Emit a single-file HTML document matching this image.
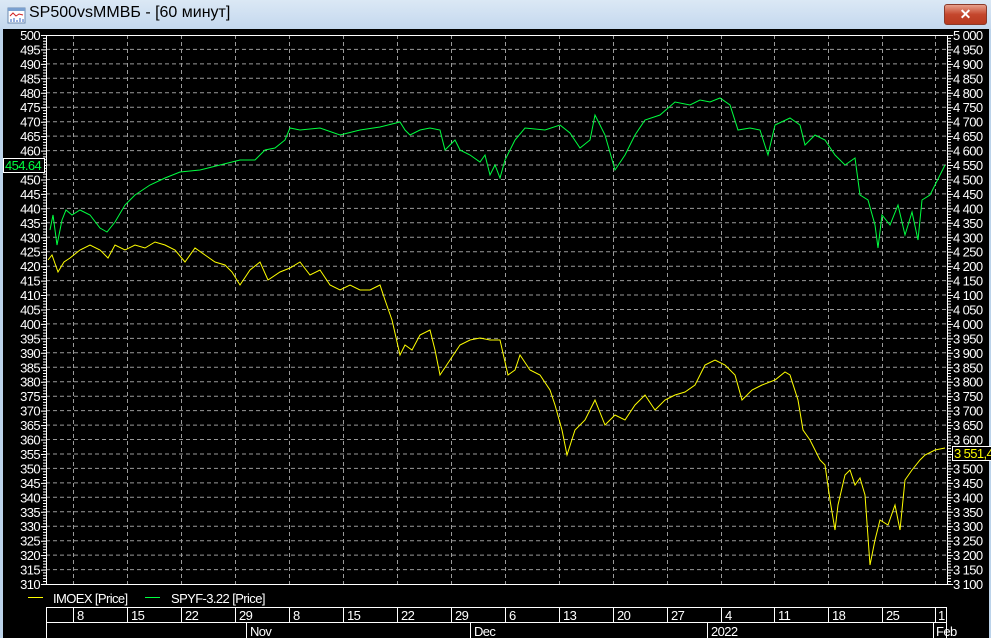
<!DOCTYPE html>
<html><head><meta charset="utf-8"><style>
html,body{margin:0;padding:0;width:991px;height:638px;overflow:hidden;background:#bcd3ea}
#tb{position:absolute;left:0;top:0;width:991px;height:29px;background:linear-gradient(#dbe8f5,#c4d8ee)}
#tt{position:absolute;left:29px;top:4px;font:16px "Liberation Sans",sans-serif;color:#000}
#cl{position:absolute;left:944px;top:4px;width:41px;height:19px;border:1px solid #8a3a2a;border-radius:3px;background:linear-gradient(#e8a08c,#c4462c 50%,#b83a20);color:#fff;font:bold 14px "Liberation Sans",sans-serif;text-align:center;line-height:19px}
svg{position:absolute;left:0;top:0}
text{font-family:"Liberation Sans",sans-serif;font-size:13px;fill:#fff;letter-spacing:-0.6px}
</style></head><body>
<div id="tb"></div>
<svg width="20" height="20" style="left:7px;top:6px"><rect x="1" y="2" width="17" height="15" fill="#fff" stroke="#6a8ab0"/><rect x="1" y="2" width="17" height="3" fill="#7aa0d0"/><path d="M3 10l3-3 3 3 3-2 4 1" stroke="#d02020" fill="none"/><path d="M4 16v-3M7 16v-4M10 16v-2M13 16v-4M16 16v-3" stroke="#3060c0"/></svg>
<div id="tt">SP500vsMMBБ - [60 минут]</div>
<div id="cl">✕</div>
<svg width="991" height="638">
<rect x="3" y="29" width="986" height="609" fill="#000"/>
<g stroke="#9a9a9a" stroke-dasharray="4 3" stroke-width="1">
<path d="M46 49.4H947M46 63.9H947M46 78.3H947M46 92.8H947M46 107.2H947M46 121.7H947M46 136.1H947M46 150.6H947M46 165H947M46 179.5H947M46 193.9H947M46 208.4H947M46 222.8H947M46 237.3H947M46 251.7H947M46 266.2H947M46 280.6H947M46 295H947M46 309.5H947M46 323.9H947M46 338.4H947M46 352.8H947M46 367.3H947M46 381.7H947M46 396.2H947M46 410.6H947M46 425.1H947M46 439.5H947M46 454H947M46 468.4H947M46 482.9H947M46 497.3H947M46 511.8H947M46 526.2H947M46 540.7H947M46 555.1H947M46 569.6H947"/>
<path d="M73.5 35V584M127.5 35V584M181.5 35V584M235.5 35V584M289.5 35V584M343.5 35V584M397.5 35V584M451.5 35V584M505.5 35V584M559.5 35V584M613.5 35V584M667.5 35V584M721.5 35V584M774.5 35V584M828.5 35V584M882.5 35V584M935.5 35V584"/>
</g>
<rect x="46.5" y="35.5" width="901" height="549" fill="none" stroke="#fff"/>
<line x1="44.5" y1="35" x2="44.5" y2="585" stroke="#fff" stroke-width="3" stroke-dasharray="1 1.889"/>
<line x1="949.5" y1="35" x2="949.5" y2="585" stroke="#fff" stroke-width="3" stroke-dasharray="1 1.889"/>
<g stroke="#fff"><path d="M41 35.5h5M41 49.9h5M41 64.4h5M41 78.8h5M41 93.3h5M41 107.7h5M41 122.2h5M41 136.6h5M41 151.1h5M41 165.5h5M41 180h5M41 194.4h5M41 208.9h5M41 223.3h5M41 237.8h5M41 252.2h5M41 266.7h5M41 281.1h5M41 295.5h5M41 310h5M41 324.4h5M41 338.9h5M41 353.3h5M41 367.8h5M41 382.2h5M41 396.7h5M41 411.1h5M41 425.6h5M41 440h5M41 454.5h5M41 468.9h5M41 483.4h5M41 497.8h5M41 512.3h5M41 526.7h5M41 541.2h5M41 555.6h5M41 570.1h5M41 584.5h5"/>
<path d="M947 35.5h6M947 49.9h6M947 64.4h6M947 78.8h6M947 93.3h6M947 107.7h6M947 122.2h6M947 136.6h6M947 151.1h6M947 165.5h6M947 180h6M947 194.4h6M947 208.9h6M947 223.3h6M947 237.8h6M947 252.2h6M947 266.7h6M947 281.1h6M947 295.5h6M947 310h6M947 324.4h6M947 338.9h6M947 353.3h6M947 367.8h6M947 382.2h6M947 396.7h6M947 411.1h6M947 425.6h6M947 440h6M947 454.5h6M947 468.9h6M947 483.4h6M947 497.8h6M947 512.3h6M947 526.7h6M947 541.2h6M947 555.6h6M947 570.1h6M947 584.5h6"/></g>
<g text-anchor="end">
<text x="40" y="40">500</text><text x="40" y="54.4">495</text><text x="40" y="68.9">490</text><text x="40" y="83.3">485</text><text x="40" y="97.8">480</text><text x="40" y="112.2">475</text><text x="40" y="126.7">470</text><text x="40" y="141.1">465</text><text x="40" y="155.6">460</text><text x="40" y="184.5">450</text><text x="40" y="198.9">445</text><text x="40" y="213.4">440</text><text x="40" y="227.8">435</text><text x="40" y="242.3">430</text><text x="40" y="256.7">425</text><text x="40" y="271.2">420</text><text x="40" y="285.6">415</text><text x="40" y="300">410</text><text x="40" y="314.5">405</text><text x="40" y="328.9">400</text><text x="40" y="343.4">395</text><text x="40" y="357.8">390</text><text x="40" y="372.3">385</text><text x="40" y="386.7">380</text><text x="40" y="401.2">375</text><text x="40" y="415.6">370</text><text x="40" y="430.1">365</text><text x="40" y="444.5">360</text><text x="40" y="459">355</text><text x="40" y="473.4">350</text><text x="40" y="487.9">345</text><text x="40" y="502.3">340</text><text x="40" y="516.8">335</text><text x="40" y="531.2">330</text><text x="40" y="545.7">325</text><text x="40" y="560.1">320</text><text x="40" y="574.6">315</text><text x="40" y="589">310</text>
</g>
<rect x="3.5" y="158.5" width="41" height="14" fill="#000" stroke="#fff"/><text x="5" y="170" style="fill:#00ff40">454.64</text>
<g>
<text x="953" y="40">5 000</text><text x="953" y="54.4">4 950</text><text x="953" y="68.9">4 900</text><text x="953" y="83.3">4 850</text><text x="953" y="97.8">4 800</text><text x="953" y="112.2">4 750</text><text x="953" y="126.7">4 700</text><text x="953" y="141.1">4 650</text><text x="953" y="155.6">4 600</text><text x="953" y="170">4 550</text><text x="953" y="184.5">4 500</text><text x="953" y="198.9">4 450</text><text x="953" y="213.4">4 400</text><text x="953" y="227.8">4 350</text><text x="953" y="242.3">4 300</text><text x="953" y="256.7">4 250</text><text x="953" y="271.2">4 200</text><text x="953" y="285.6">4 150</text><text x="953" y="300">4 100</text><text x="953" y="314.5">4 050</text><text x="953" y="328.9">4 000</text><text x="953" y="343.4">3 950</text><text x="953" y="357.8">3 900</text><text x="953" y="372.3">3 850</text><text x="953" y="386.7">3 800</text><text x="953" y="401.2">3 750</text><text x="953" y="415.6">3 700</text><text x="953" y="430.1">3 650</text><text x="953" y="444.5">3 600</text><text x="953" y="473.4">3 500</text><text x="953" y="487.9">3 450</text><text x="953" y="502.3">3 400</text><text x="953" y="516.8">3 350</text><text x="953" y="531.2">3 300</text><text x="953" y="545.7">3 250</text><text x="953" y="560.1">3 200</text><text x="953" y="574.6">3 150</text><text x="953" y="589">3 100</text>
</g>
<rect x="952.5" y="446.5" width="40" height="14" fill="#000" stroke="#fff"/><text x="954" y="458" style="fill:#ffff00">3 551,4</text>
<polyline fill="none" stroke="#00ff40" stroke-width="1" points="50,230 53,215 57,245 62,220 66,210 72,215 80,210 90,215 100,228 107,232 115,222 125,205 135,195 150,185 165,178 180,172 200,170 220,165 240,160 255,160 265,150 275,148 285,140 290,128 300,130 320,128 340,135 360,130 380,127 400,122 405,130 410,135 420,130 430,128 440,130 445,150 455,140 460,150 470,155 480,162 485,155 490,175 495,165 500,178 505,160 515,140 525,128 545,130 560,125 570,133 580,148 590,140 595,115 605,135 615,170 625,155 635,135 645,120 660,115 675,102 690,105 700,100 710,102 720,98 730,105 738,130 750,128 760,130 768,155 775,125 790,118 800,125 805,145 815,135 825,140 835,155 845,165 855,158 860,195 868,200 875,225 878,248 882,215 890,225 898,205 905,235 912,212 918,240 922,200 930,195 935,185 940,175 945,165"/>
<polyline fill="none" stroke="#ffff00" stroke-width="1" points="48,260 52,255 58,272 64,262 70,258 80,250 90,245 100,250 108,258 115,245 125,250 135,245 145,248 155,242 165,245 175,250 185,262 195,248 205,255 215,262 225,265 232,272 240,285 250,270 260,262 268,280 280,272 290,268 300,262 310,275 320,270 330,285 340,290 350,285 360,290 370,290 380,285 385,300 392,320 400,355 405,345 412,350 420,335 430,330 435,350 440,375 450,360 460,345 470,340 480,338 490,340 500,340 508,375 515,370 520,355 530,370 540,375 550,390 555,405 562,430 567,455 575,430 585,420 595,400 605,425 615,415 625,420 635,405 645,395 655,410 665,400 675,395 685,392 695,385 705,365 715,360 725,365 735,375 742,400 752,390 762,385 775,380 785,372 790,375 798,400 803,430 810,440 820,460 825,465 830,500 835,530 838,505 845,475 850,470 855,485 860,478 865,495 870,565 875,540 880,520 888,525 895,505 900,530 905,480 912,470 920,460 925,455 935,450 945,448"/>
<rect x="28" y="597" width="15" height="1" fill="#ffff00"/><text x="53" y="603">IMOEX [Price]</text>
<rect x="145" y="597" width="15" height="1" fill="#00ff40"/><text x="171" y="603">SPYF-3.22 [Price]</text>
<g stroke="#fff" fill="none">
<path d="M46.5 607V638M46 607.5H947M46 622.5H947M946.5 607V638"/>
<path d="M73.5 607V622M127.5 607V622M181.5 607V622M235.5 607V622M289.5 607V622M343.5 607V622M397.5 607V622M451.5 607V622M505.5 607V622M559.5 607V622M613.5 607V622M667.5 607V622M721.5 607V622M774.5 607V622M828.5 607V622M882.5 607V622M935.5 607V622"/>
<path d="M246.5 622V638M470.5 622V638M707.5 622V638M933.5 622V638"/>
</g>
<g>
<text x="77" y="620">8</text><text x="131" y="620">15</text><text x="185" y="620">22</text><text x="239" y="620">29</text><text x="293" y="620">8</text><text x="347" y="620">15</text><text x="401" y="620">22</text><text x="455" y="620">29</text><text x="509" y="620">6</text><text x="563" y="620">13</text><text x="617" y="620">20</text><text x="671" y="620">27</text><text x="725" y="620">4</text><text x="778" y="620">11</text><text x="832" y="620">18</text><text x="886" y="620">25</text><text x="938" y="620">1</text>
<text x="250" y="636">Nov</text><text x="474" y="636">Dec</text><text x="711" y="636">2022</text><text x="936" y="636">Feb</text>
</g>
</svg>
</body></html>
